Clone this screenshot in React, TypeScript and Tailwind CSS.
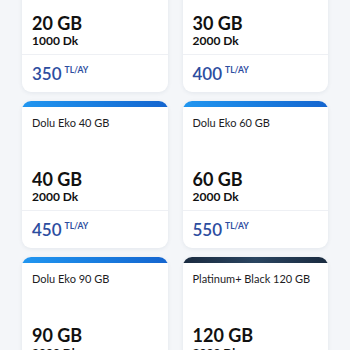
const plans = [
  { title: 'Dolu Eko 20 GB', gb: '20 GB', dk: '1000 Dk', price: '350', dark: false },
  { title: 'Dolu Eko 30 GB', gb: '30 GB', dk: '2000 Dk', price: '400', dark: false },
  { title: 'Dolu Eko 40 GB', gb: '40 GB', dk: '2000 Dk', price: '450', dark: false },
  { title: 'Dolu Eko 60 GB', gb: '60 GB', dk: '2000 Dk', price: '550', dark: false },
  { title: 'Dolu Eko 90 GB', gb: '90 GB', dk: '2000 Dk', price: '650', dark: false },
  { title: 'Platinum+ Black 120 GB', gb: '120 GB', dk: '3000 Dk', price: '800', dark: true },
];

function PlanCard({ title, gb, dk, price, dark }: (typeof plans)[number]) {
  return (
    <div className="bg-white rounded-[9px] overflow-hidden shadow-[0_1px_4px_rgba(30,50,90,0.08)]">
      <div
        className={
          dark
            ? 'h-[6px] bg-gradient-to-r from-[#1a2b40] via-[#2a4560] to-[#1a2b40]'
            : 'h-[6px] bg-gradient-to-r from-[#2196f0] to-[#1565cf]'
        }
      />
      <div className="px-[10px]">
        <div className="h-[62px] pt-[8px] text-[11px] leading-[16px] text-[#1d1d1f]">{title}</div>
        <div className="text-[18px] leading-[20px] font-bold text-[#111]">{gb}</div>
        <div className="mt-px text-[12px] leading-[14px] font-bold text-[#111]">{dk}</div>
      </div>
      <div className="mt-[6px] border-t border-[#eef0f4] px-[10px] pt-[9px] pb-[8px] flex items-start">
        <span className="text-[17px] leading-[20px] font-semibold text-[#2d4d9f]">{price}</span>
        <span className="ml-[3px] mt-[1px] text-[8.5px] leading-[10px] font-bold text-[#2d4d9f]">TL/AY</span>
      </div>
    </div>
  );
}

export default function App() {
  return (
    <div className="w-[350px] h-[350px] overflow-hidden bg-[#f4f6f9]" style={{ fontFamily: 'Lato, "Noto Sans", sans-serif' }}>
      <div className="-mt-[55px] px-[22px] grid grid-cols-2 gap-x-[15px] gap-y-[9px]">
        {plans.map((p) => (
          <PlanCard key={p.title} {...p} />
        ))}
      </div>
    </div>
  );
}
